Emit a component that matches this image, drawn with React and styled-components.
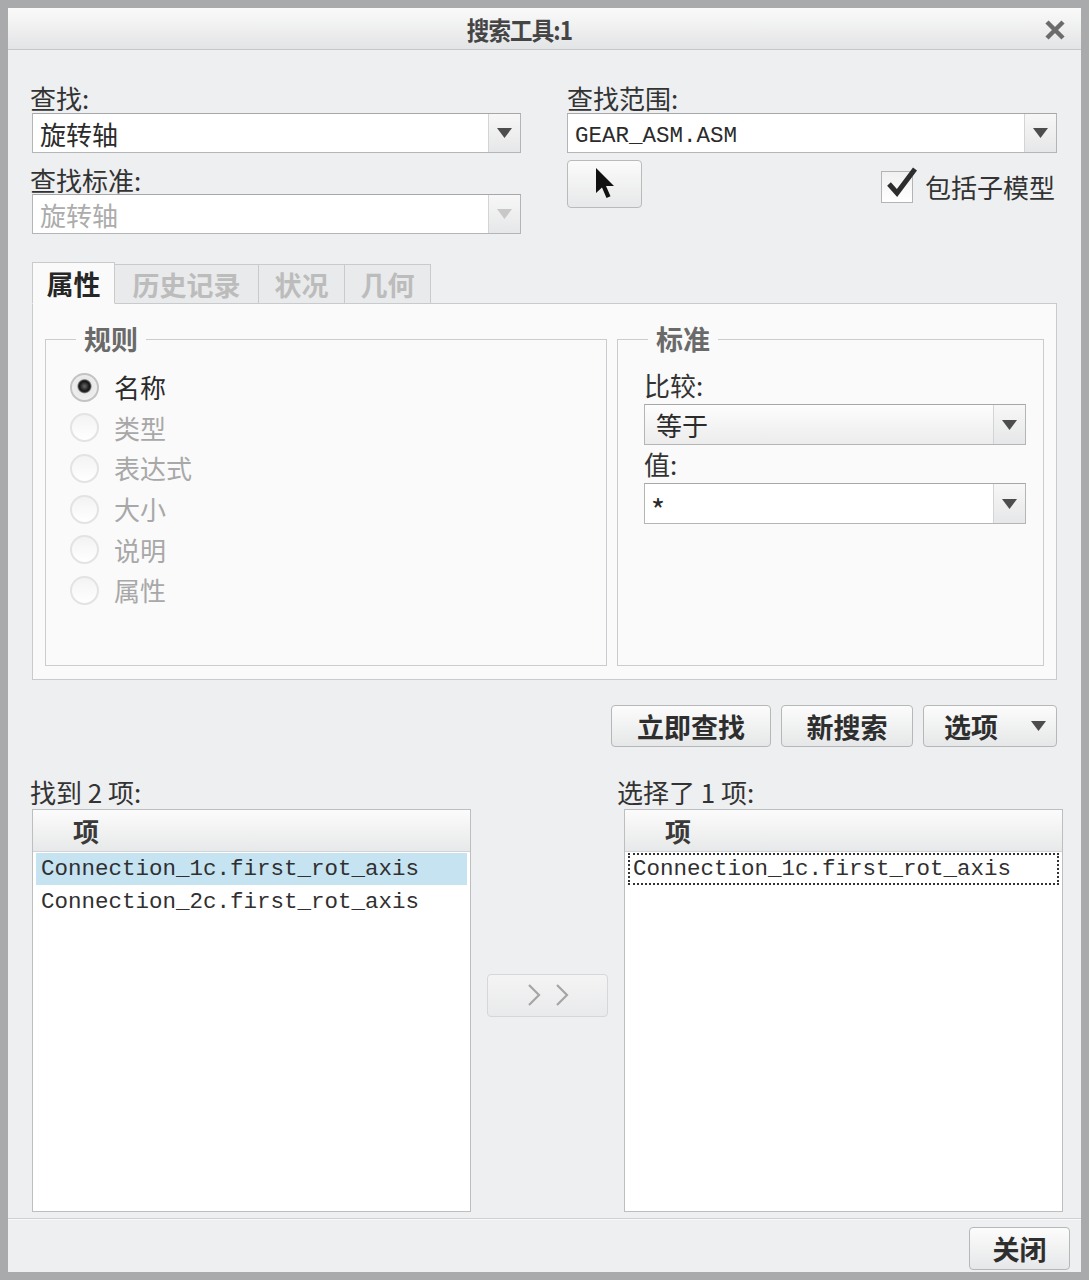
import React from 'react';
import styled, { createGlobalStyle } from 'styled-components';

const cjk = '"Noto Sans CJK SC", "Liberation Sans", sans-serif';
const mono = '"Liberation Mono", "Noto Sans CJK SC", monospace';

const GlobalStyle = createGlobalStyle`
  html, body {
    margin: 0;
    padding: 0;
    background: #acadae;
  }
  * {
    box-sizing: border-box;
  }
`;

const Window = styled.div`
  width: 1089px;
  height: 1280px;
  border: 8px solid #a9aaab;
  background: #eeeff0;
  display: flex;
  flex-direction: column;
  font-family: ${cjk};
  color: #2e2e2e;
`;

const TitleBar = styled.div`
  height: 42px;
  flex-shrink: 0;
  position: relative;
  display: flex;
  align-items: center;
  justify-content: center;
  padding-right: 50px;
  background: linear-gradient(#fafafa, #e3e4e5);
  border-bottom: 1px solid #c6c7c8;
`;

const Title = styled.div`
  font-size: 25px;
  font-weight: 700;
  color: #454545;
  letter-spacing: -1px;
  transform: scaleX(0.9);
`;

const CloseBox = styled.div`
  position: absolute;
  right: 16px;
  top: 12px;
  width: 20px;
  height: 20px;
`;

const Body = styled.div`
  flex: 1;
  display: flex;
  flex-direction: column;
  padding: 34px 24px 6px 22px;
  border-bottom: 1px solid #d0d1d2;
`;

const TopGrid = styled.div`
  display: grid;
  grid-template-columns: 491px 490px;
  column-gap: 46px;
`;

const Column = styled.div`
  display: flex;
  flex-direction: column;
`;

const Label = styled.div`
  font-size: 26px;
  line-height: 28px;
  height: 28px;
  color: #333;
  margin-top: ${p => p.$top || 0}px;
  margin-bottom: ${p => (p.$gap === undefined ? 1 : p.$gap)}px;
  margin-left: ${p => p.$left || 0}px;
  white-space: nowrap;
`;

const Combo = styled.div`
  display: flex;
  height: ${p => p.$h || 40}px;
  margin-left: ${p => p.$left || 0}px;
  border: 1px solid #b4b5b6;
  border-top-color: #a6a7a8;
  background: ${p => (p.$raised ? 'linear-gradient(#fdfdfd, #ececed)' : '#fff')};
`;

const ComboText = styled.div`
  flex: 1;
  display: flex;
  align-items: center;
  padding-left: ${p => p.$pad || 7}px;
  padding-top: ${p => p.$drop || 0}px;
  font-family: ${p => (p.$mono ? mono : cjk)};
  font-size: ${p => p.$size || (p.$mono ? '22.5px' : '26px')};
  color: ${p => (p.$disabled ? '#acacac' : '#2b2b2b')};
  white-space: nowrap;
`;

const ComboButton = styled.div`
  width: 32px;
  flex-shrink: 0;
  display: flex;
  align-items: center;
  justify-content: center;
  border-left: 1px solid #d3d4d5;
  background: linear-gradient(#f7f7f7, #e6e7e8);
`;

const ScopeRow = styled.div`
  display: flex;
  align-items: flex-start;
  justify-content: space-between;
  margin-top: 7px;
`;

const PickButton = styled.div`
  width: 75px;
  height: 48px;
  border: 1px solid #b9babb;
  border-radius: 4px;
  background: linear-gradient(#fbfbfb, #e7e8e9);
  display: flex;
  align-items: center;
  justify-content: center;
`;

const CheckRow = styled.div`
  display: flex;
  align-items: center;
  gap: 12px;
  margin-top: 11px;
  margin-right: 2px;
`;

const CheckBox = styled.div`
  width: 32px;
  height: 32px;
  position: relative;
  border: 1px solid #b3b4b5;
  background: linear-gradient(#f0f0f0, #ffffff);
`;

const CheckText = styled.span`
  font-size: 26px;
  line-height: 28px;
  color: #333;
`;

const Tabs = styled.div`
  margin-top: 27px;
  margin-left: 2px;
  display: flex;
  flex-direction: column;
`;

const TabStrip = styled.div`
  display: flex;
  height: 42px;
  align-items: flex-end;
`;

const Tab = styled.div`
  width: ${p => p.$w}px;
  height: ${p => (p.$active ? 42 : 40)}px;
  display: flex;
  align-items: center;
  justify-content: center;
  font-size: 27px;
  font-weight: 700;
  color: ${p => (p.$active ? '#262626' : '#bcbcbc')};
  background: ${p => (p.$active ? '#fafafa' : '#e9eaeb')};
  border: 1px solid #c9cacb;
  border-bottom: ${p => (p.$active ? '1px solid #fafafa' : '1px solid #c9cacb')};
  border-left-width: ${p => (p.$first ? 1 : 0)}px;
  margin-bottom: -1px;
  position: relative;
  z-index: ${p => (p.$active ? 2 : 1)};
`;

const TabPanel = styled.div`
  height: 377px;
  border: 1px solid #c9cacb;
  background: #fafafa;
  padding: 21px 12px 13px 12px;
  display: grid;
  grid-template-columns: 562px 427px;
  column-gap: 10px;
`;

const Group = styled.fieldset`
  margin: 0;
  padding: 0;
  border: 1px solid #cbcccd;
  min-width: 0;
`;

const Legend = styled.legend`
  margin-left: 30px;
  padding: 0 8px;
  font-size: 27px;
  line-height: 28px;
  font-weight: 700;
  color: #6a6a6a;
`;

const GroupContent = styled.div`
  display: flex;
  flex-direction: column;
  padding: ${p => p.$pad};
`;

const RadioRow = styled.div`
  display: flex;
  align-items: center;
  height: 40.6px;
  gap: 15px;
  padding-left: 24px;
`;

const RadioDot = styled.span`
  width: 29px;
  height: 29px;
  border-radius: 50%;
  flex-shrink: 0;
  border: 2px solid ${p => (p.$on ? '#c3c3c3' : '#e3e3e3')};
  background: ${p =>
    p.$on
      ? 'radial-gradient(circle at 50% 45%, #6a6a6a 0, #151515 5px, #3a3a3a 6px, #e8e8e8 7.5px, #f6f6f6 100%)'
      : 'linear-gradient(#f3f3f3, #ffffff)'};
`;

const RadioText = styled.span`
  font-size: 26px;
  line-height: 28px;
  color: ${p => (p.$on ? '#2b2b2b' : '#a8a8a8')};
`;

const ActionRow = styled.div`
  display: flex;
  justify-content: flex-end;
  gap: 10px;
  margin-top: 25px;
`;

const Button = styled.div`
  width: ${p => p.$w}px;
  height: ${p => p.$h || 42}px;
  border: 1px solid #b6b7b8;
  border-radius: 4px;
  background: linear-gradient(#fcfcfc, #e6e7e8);
  display: flex;
  align-items: center;
  justify-content: ${p => (p.$split ? 'space-between' : 'center')};
  padding: ${p => (p.$split ? '0 10px 0 20px' : '0')};
  font-size: 27px;
  font-weight: 700;
  color: #2e2e2e;
  white-space: nowrap;
`;

const ListsGrid = styled.div`
  flex: 1;
  display: grid;
  grid-template-columns: 441px 146px 446px;
  margin-top: 31px;
  margin-right: -6px;
`;

const ListColumn = styled.div`
  display: flex;
  flex-direction: column;
`;

const MiddleColumn = styled.div`
  display: flex;
  align-items: center;
  padding-left: 16px;
`;

const ListBox = styled.div`
  flex: 1;
  margin-left: ${p => p.$left}px;
  margin-top: 3px;
  border: 1px solid #bdbebf;
  background: #fff;
  display: flex;
  flex-direction: column;
`;

const ListHeader = styled.div`
  height: 42px;
  padding-left: 40px;
  display: flex;
  align-items: center;
  font-size: 26px;
  font-weight: 700;
  color: #3a3a3a;
  background: linear-gradient(#fcfcfc, #e7e8e9);
  border-bottom: 1px solid #d2d3d4;
`;

const ListRow = styled.div`
  height: 32px;
  margin: 1px 3px 0 3px;
  padding-left: 3px;
  display: flex;
  align-items: center;
  font-family: ${mono};
  font-size: 22.5px;
  color: #303030;
  white-space: nowrap;
  background: ${p => (p.$selected ? '#c6e3f2' : 'transparent')};
  border: ${p => (p.$focus ? '2px dotted #333' : '2px solid transparent')};
`;

const MoveButton = styled.div`
  width: 121px;
  height: 43px;
  border: 1px solid #d6d7d8;
  border-radius: 4px;
  background: linear-gradient(#f4f4f5, #e9eaeb);
  display: flex;
  align-items: center;
  justify-content: center;
  gap: 14px;
`;

const Footer = styled.div`
  height: 53px;
  flex-shrink: 0;
  border-top: 1px solid #f8f8f8;
  display: flex;
  justify-content: flex-end;
  align-items: flex-start;
  padding: 7px 11px 0 0;
  background: #eeeff0;
`;

const Arrow = ({ color = '#4d4d4d' }) => (
  <svg width="15" height="10" viewBox="0 0 15 10">
    <polygon points="0,0 15,0 7.5,10" fill={color} />
  </svg>
);

const Chevron = () => (
  <svg width="14" height="24" viewBox="0 0 14 24">
    <polyline points="2,2 12,12 2,22" fill="none" stroke="#a5a5a5" strokeWidth="2.2" />
  </svg>
);

const Cursor = () => (
  <svg width="22" height="34" viewBox="0 0 22 34">
    <path d="M2 1 L2 26 L8 20.5 L12.5 31 L16.5 29.3 L12 19 L20 19 Z" fill="#111" />
  </svg>
);

const CheckMark = () => (
  <svg
    width="36"
    height="34"
    viewBox="0 0 36 34"
    style={{ position: 'absolute', left: 2, top: -6 }}
  >
    <polyline
      points="5,18 13,27 31,3"
      fill="none"
      stroke="#2d2d2d"
      strokeWidth="5"
      strokeLinejoin="miter"
    />
  </svg>
);

const CloseIcon = () => (
  <CloseBox>
    <svg width="20" height="20" viewBox="0 0 20 20">
      <path d="M2 2 L18 18 M18 2 L2 18" stroke="#6b6b6b" strokeWidth="4.5" />
    </svg>
  </CloseBox>
);

const rules = ['名称', '类型', '表达式', '大小', '说明', '属性'];
const tabs = [
  { text: '属性', w: 83 },
  { text: '历史记录', w: 144 },
  { text: '状况', w: 86 },
  { text: '几何', w: 86 },
];

const App = () => (
  <>
    <GlobalStyle />
    <Window>
      <TitleBar>
        <Title>搜索工具:1</Title>
        <CloseIcon />
      </TitleBar>
      <Body>
        <TopGrid>
          <Column>
            <Label>查找:</Label>
            <Combo $left={2}>
              <ComboText>旋转轴</ComboText>
              <ComboButton>
                <Arrow />
              </ComboButton>
            </Combo>
            <Label $top={13} $gap={0}>查找标准:</Label>
            <Combo $left={2}>
              <ComboText $disabled>旋转轴</ComboText>
              <ComboButton>
                <Arrow color="#c8c8c8" />
              </ComboButton>
            </Combo>
          </Column>
          <Column>
            <Label>查找范围:</Label>
            <Combo>
              <ComboText $mono $drop={5}>GEAR_ASM.ASM</ComboText>
              <ComboButton>
                <Arrow />
              </ComboButton>
            </Combo>
            <ScopeRow>
              <PickButton>
                <Cursor />
              </PickButton>
              <CheckRow>
                <CheckBox>
                  <CheckMark />
                </CheckBox>
                <CheckText>包括子模型</CheckText>
              </CheckRow>
            </ScopeRow>
          </Column>
        </TopGrid>

        <Tabs>
          <TabStrip>
            {tabs.map((t, i) => (
              <Tab key={t.text} $w={t.w} $active={i === 0} $first={i === 0}>
                {t.text}
              </Tab>
            ))}
          </TabStrip>
          <TabPanel>
            <Group>
              <Legend>规则</Legend>
              <GroupContent $pad="14px 0 0 0">
                {rules.map((r, i) => (
                  <RadioRow key={r}>
                    <RadioDot $on={i === 0} />
                    <RadioText $on={i === 0}>{r}</RadioText>
                  </RadioRow>
                ))}
              </GroupContent>
            </Group>
            <Group>
              <Legend>标准</Legend>
              <GroupContent $pad="18px 17px 0 26px">
                <Label $gap={5}>比较:</Label>
                <Combo $h={41} $raised>
                  <ComboText $pad={11}>等于</ComboText>
                  <ComboButton>
                    <Arrow />
                  </ComboButton>
                </Combo>
                <Label $top={5} $gap={5}>值:</Label>
                <Combo $h={41}>
                  <ComboText $pad={6} $size="30px" $drop={10}>*</ComboText>
                  <ComboButton>
                    <Arrow />
                  </ComboButton>
                </Combo>
              </GroupContent>
            </Group>
          </TabPanel>
        </Tabs>

        <ActionRow>
          <Button $w={160}>立即查找</Button>
          <Button $w={132}>新搜索</Button>
          <Button $w={134} $split>
            <span>选项</span>
            <Arrow />
          </Button>
        </ActionRow>

        <ListsGrid>
          <ListColumn>
            <Label $gap={0}>找到 2 项:</Label>
            <ListBox $left={2}>
              <ListHeader>项</ListHeader>
              <ListRow $selected>Connection_1c.first_rot_axis</ListRow>
              <ListRow>Connection_2c.first_rot_axis</ListRow>
            </ListBox>
          </ListColumn>
          <MiddleColumn>
            <MoveButton>
              <Chevron />
              <Chevron />
            </MoveButton>
          </MiddleColumn>
          <ListColumn>
            <Label $gap={0}>选择了 1 项:</Label>
            <ListBox $left={7}>
              <ListHeader>项</ListHeader>
              <ListRow $focus>Connection_1c.first_rot_axis</ListRow>
            </ListBox>
          </ListColumn>
        </ListsGrid>
      </Body>
      <Footer>
        <Button $w={101} $h={43}>关闭</Button>
      </Footer>
    </Window>
  </>
);

export default App;
